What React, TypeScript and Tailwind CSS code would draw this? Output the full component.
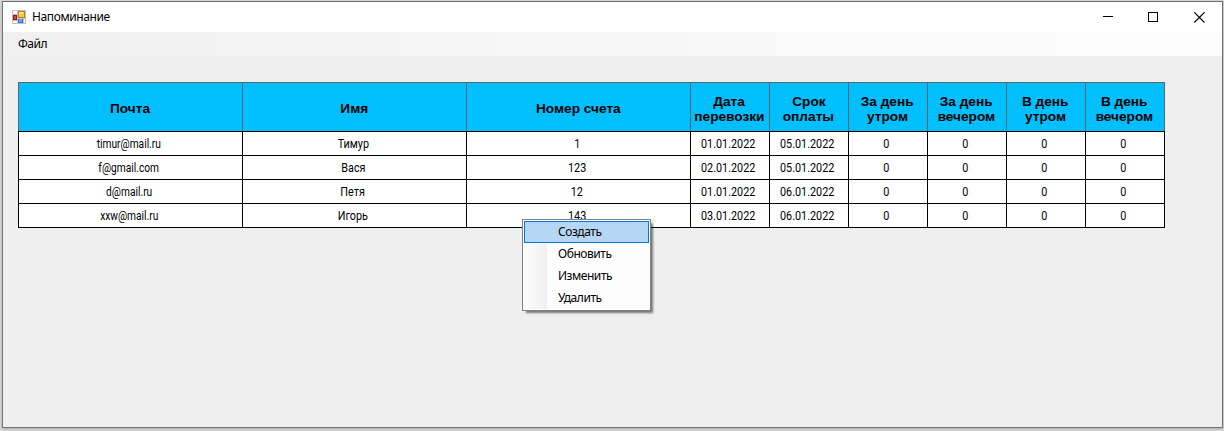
const columns = [
  ['Почта'], ['Имя'], ['Номер счета'], ['Дата', 'перевозки'], ['Срок', 'оплаты'],
  ['За день', 'утром'], ['За день', 'вечером'], ['В день', 'утром'], ['В день', 'вечером'],
];

const rows = [
  ['timur@mail.ru', 'Тимур', '1', '01.01.2022', '05.01.2022', '0', '0', '0', '0'],
  ['f@gmail.com', 'Вася', '123', '02.01.2022', '05.01.2022', '0', '0', '0', '0'],
  ['d@mail.ru', 'Петя', '12', '01.01.2022', '06.01.2022', '0', '0', '0', '0'],
  ['xxw@mail.ru', 'Игорь', '143', '03.01.2022', '06.01.2022', '0', '0', '0', '0'],
];

const gridCols = 'grid grid-cols-[224px_224px_224px_79px_79px_79px_79px_79px_79px]';
const menuItems = ['Создать', 'Обновить', 'Изменить', 'Удалить'];

function AppIcon() {
  return (
    <svg width="14" height="14" viewBox="0 0 14 14" shapeRendering="crispEdges">
      <rect width="14" height="14" fill="#bfc0c6" />
      <rect x="1" y="1" width="4" height="3" fill="#fafafc" />
      <rect x="1" y="11" width="4" height="2" fill="#fafafc" />
      <rect x="12" y="9" width="1" height="4" fill="#fafafc" />
      <rect x="1" y="5" width="4" height="5" fill="#991515" />
      <rect x="2" y="6" width="2" height="3" fill="#d04a45" />
      <rect x="6" y="1" width="7" height="7" fill="#bd8508" />
      <rect x="7" y="2" width="5" height="5" fill="#fbc93c" />
      <rect x="7" y="2" width="4" height="2" fill="#ffe594" />
      <rect x="6" y="9" width="5" height="4" fill="#3c70cf" />
      <rect x="7" y="9" width="3" height="3" fill="#6fa2f2" />
    </svg>
  );
}

function ContextMenu() {
  return (
    <div className="absolute left-[522px] top-[219px] h-[92px] w-[129px] border border-[#808080] bg-[#fdfdfd] p-px shadow-[3px_3px_2px_-1px_rgba(0,0,0,0.5)]">
      <div className="flex h-full flex-col bg-[linear-gradient(to_right,#fcfcfc_0px,#f0f0f0_23px,#fdfdfd_23px)]">
        {menuItems.map((item, i) => (
          <div
            key={item}
            className={`flex h-[22px] items-center border pl-[33px] ${i === 0 ? 'border-[#0078d7] bg-[#b5d7f3]' : 'border-transparent'}`}
          >
            <span className="tracking-[-0.45px]">{item}</span>
          </div>
        ))}
      </div>
    </div>
  );
}

export default function App() {
  return (
    <div className="relative h-[431px] w-[1224px] overflow-hidden bg-[#dcdcdc] pl-[2px] pt-px font-['Noto_Sans',sans-serif] text-[12px] leading-[16px] text-black">
      <div className="flex h-[427px] w-[1221px] flex-col border border-[#707070] bg-[#efefef] shadow-[0_1px_3px_rgba(0,0,0,0.25)]">
        <header className="flex h-[30px] shrink-0 items-center bg-white pl-[9px] pr-[17px]">
          <AppIcon />
          <h1 className="ml-[6px] tracking-[-0.4px]">Напоминание</h1>
          <div className="ml-auto flex items-center gap-[34px]">
            <svg width="11" height="11" viewBox="0 0 11 11" shapeRendering="crispEdges"><path d="M0 4.5h10" stroke="#000" /></svg>
            <svg width="11" height="11" viewBox="0 0 11 11" fill="none" shapeRendering="crispEdges"><path d="M.5 .5h9v9h-9z" stroke="#000" /></svg>
            <svg width="12" height="11" viewBox="0 0 12 11"><path d="M1.3 .3l10.2 10.2M11.5 .3L1.3 10.5" stroke="#000" strokeWidth="1.1" /></svg>
          </div>
        </header>
        <nav className="flex h-[24px] shrink-0 items-center bg-linear-to-r from-[#f0f0f0] to-[#fdfdfd] pl-[15px]">
          <span className="tracking-[-0.5px]">Файл</span>
        </nav>
        <main className="pl-[15px] pt-[26px]">
          <div className="w-[1147px]">
            <div className={`${gridCols} h-[49px] border-l border-t border-[#646464] bg-[#00bfff]`}>
              {columns.map((lines, i) => (
                <div key={i} className="flex flex-col items-center justify-center border-r border-[#646464] pr-px pt-[3px] font-['Liberation_Sans',sans-serif] text-[13px] font-bold leading-[15px]">
                  {lines.map((line) => <span key={line} className="scale-x-[1.05] whitespace-nowrap">{line}</span>)}
                </div>
              ))}
            </div>
            <div className="border-l border-t border-black bg-white">
              {rows.map((row) => (
                <div key={row[0]} className={`${gridCols} h-[24px]`}>
                  {row.map((cell, i) => (
                    <div key={i} className="flex items-center justify-center border-b border-r border-black pr-[3px] pt-px font-['Roboto',sans-serif]">
                      <span className={`whitespace-nowrap ${i === 0 ? 'scale-x-[0.85]' : 'scale-x-90'}`}>{cell}</span>
                    </div>
                  ))}
                </div>
              ))}
            </div>
          </div>
        </main>
      </div>
      <ContextMenu />
    </div>
  );
}
